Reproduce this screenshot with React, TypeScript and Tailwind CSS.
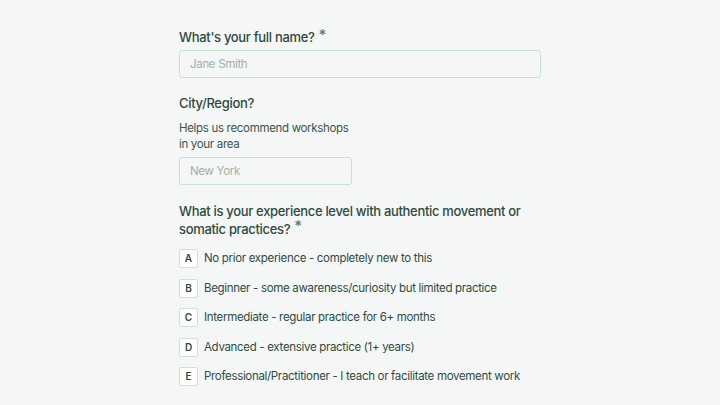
const options = [
  { key: "A", label: "No prior experience - completely new to this" },
  { key: "B", label: "Beginner - some awareness/curiosity but limited practice" },
  { key: "C", label: "Intermediate - regular practice for 6+ months" },
  { key: "D", label: "Advanced - extensive practice (1+ years)" },
  { key: "E", label: "Professional/Practitioner - I teach or facilitate movement work" },
];

export default function App() {
  return (
    <div
      className="min-h-[405px] w-[720px] bg-[#f5f7f6] text-[#2c4a40] tracking-[-0.02em]"
      style={{ fontFamily: "Inter, 'Noto Sans', sans-serif" }}
    >
      <div className="ml-[179px] w-[362px] pt-[27px]">
        {/* Full name */}
        <label className="flex items-start text-[13px] font-medium leading-[20px]">
          What's your full name?
          <span className="ml-[4px] text-[15px] leading-[16px] text-[#5f7a70]">*</span>
        </label>
        <input
          placeholder="Jane Smith"
          className="mt-[3px] h-[28px] w-full rounded-[3px] border border-[#c5e2d3] bg-[#f5f7f6] px-[10px] text-[11.5px] outline-none placeholder:text-[#a3b0ab]"
        />

        {/* City */}
        <div className="mt-[15px] text-[13px] font-medium leading-[20px]">City/Region?</div>
        <p className="mt-[7px] w-[175px] text-[11.5px] leading-[16px] text-[#3a544b]">
          Helps us recommend workshops in your area
        </p>
        <input
          placeholder="New York"
          className="mt-[5px] h-[28px] w-[173px] rounded-[3px] border border-[#c5e2d3] bg-[#f5f7f6] px-[10px] text-[11.5px] outline-none placeholder:text-[#a3b0ab]"
        />

        {/* Experience */}
        <div className="mt-[17px] text-[13px] font-medium leading-[18px]">
          What is your experience level with authentic movement or somatic practices?
          <span className="ml-[4px] inline-block align-top text-[15px] leading-[12px] text-[#5f7a70]">*</span>
        </div>
        <div className="mt-[11px] flex flex-col gap-[10.6px]">
          {options.map((o) => (
            <div key={o.key} className="flex items-center gap-[6px]">
              <span className="flex h-[19px] w-[19px] items-center justify-center rounded-[2px] border border-[#d3ddd9] bg-white text-[10px] font-semibold tracking-normal text-[#2c4a40]">
                {o.key}
              </span>
              <span className="text-[11.5px] leading-[19px] text-[#2f4b42]">{o.label}</span>
            </div>
          ))}
        </div>
      </div>
    </div>
  );
}
